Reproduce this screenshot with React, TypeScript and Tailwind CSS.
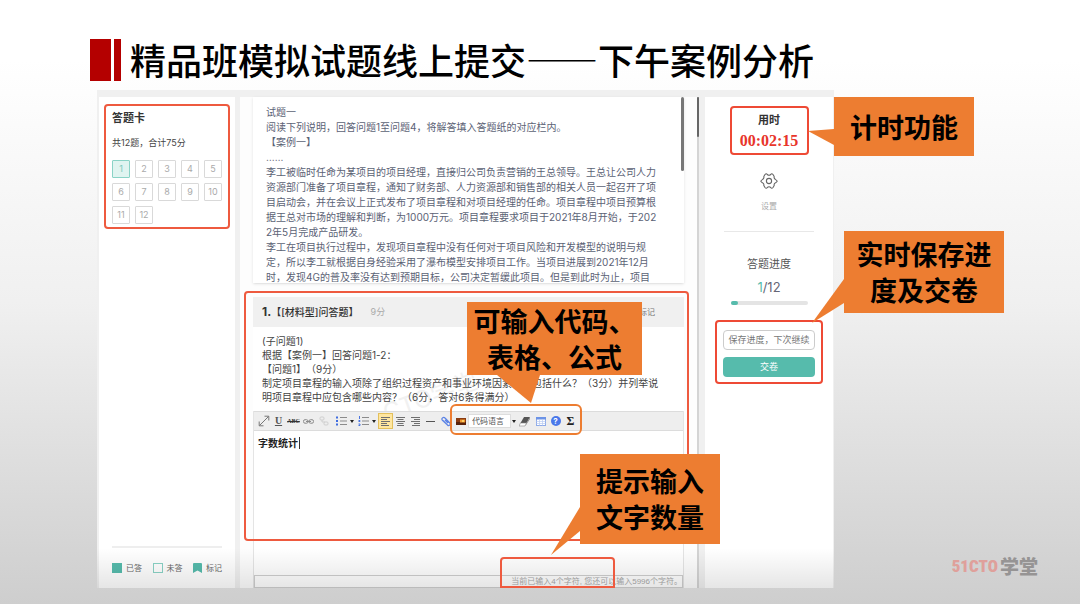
import type { ReactNode } from "react";
import clsx from "clsx";

const QUESTIONS = [1, 2, 3, 4, 5, 6, 7, 8, 9, 10, 11, 12];

const PASSAGE = [
  "试题一",
  "阅读下列说明，回答问题1至问题4，将解答填入答题纸的对应栏内。",
  "【案例一】",
  "……",
  "李工被临时任命为某项目的项目经理，直接归公司负责营销的王总领导。王总让公司人力资源部门准备了项目章程，通知了财务部、人力资源部和销售部的相关人员一起召开了项目启动会，并在会议上正式发布了项目章程和对项目经理的任命。项目章程中项目预算根据王总对市场的理解和判断，为1000万元。项目章程要求项目于2021年8月开始，于2022年5月完成产品研发。",
  "李工在项目执行过程中，发现项目章程中没有任何对于项目风险和开发模型的说明与规定，所以李工就根据自身经验采用了瀑布模型安排项目工作。当项目进展到2021年12月时，发现4G的普及率没有达到预期目标，公司决定暂缓此项目。但是到此时为止，项目",
];

type CalloutProps = {
  className: string;
  tail: string;
  children: ReactNode;
};

function Callout({ className, tail, children }: CalloutProps) {
  return (
    <div
      className={clsx(
        "absolute z-20 flex items-center justify-center bg-[#ed7d31] text-center font-['Noto_Sans_CJK_SC',sans-serif] text-[27px] leading-9 font-bold whitespace-nowrap text-black",
        className,
      )}
    >
      <svg className="absolute top-0 left-0 h-px w-px overflow-visible" aria-hidden>
        <polygon points={tail} fill="#ed7d31" />
      </svg>
      <p className="relative">{children}</p>
    </div>
  );
}

type ToolProps = {
  label: string;
  wide?: boolean;
  active?: boolean;
  children: ReactNode;
};

function Tool({ label, wide, active, children }: ToolProps) {
  return (
    <button
      type="button"
      aria-label={label}
      className={clsx(
        "flex h-4 shrink-0 items-center justify-center",
        wide ? "w-[22px] gap-[3px]" : "w-[15px]",
        active && "border border-[#e3c05c] bg-[#ffe69f]",
      )}
    >
      {children}
    </button>
  );
}

function Caret() {
  return (
    <svg width="4" height="3" viewBox="0 0 4 3" aria-hidden>
      <path d="M0 0h4L2 3z" fill="#222" />
    </svg>
  );
}

function ListIcon({ ordered }: { ordered?: boolean }) {
  return (
    <svg width="11" height="10" viewBox="0 0 11 10" aria-hidden>
      {ordered ? (
        <path d="M1.500 0v3M.5 4.500h1.500v1H.5M.5 8h1.500v1.500H.5" stroke="#4a74e0" strokeWidth="1" fill="none" />
      ) : (
        <path d="M0 .5h2v2H0zM0 4h2v2H0zM0 7.500h2v2H0z" fill="#3f6de0" />
      )}
      <path d="M4 1.500h7M4 5h7M4 8.500h7" stroke="#8b8b8b" strokeWidth="1" />
    </svg>
  );
}

function AlignIcon({ d }: { d: string }) {
  return (
    <svg width="9" height="9" viewBox="0 0 9 9" aria-hidden>
      <path d={d} stroke="#6f6f6f" strokeWidth="1" fill="none" />
    </svg>
  );
}

function Toolbar() {
  return (
    <div className="flex h-5 items-center border-y border-[#dcdcdc] bg-[#eeeeee] pl-[2px]">
      <Tool label="全屏">
        <svg width="12" height="12" viewBox="0 0 12 12" fill="none" stroke="#777" aria-hidden>
          <path d="M1.500 10.500 10.500 1.500M6.500 1.200h4.300v4.300M1.200 6.500v4.300h4.300" />
        </svg>
      </Tool>
      <Tool label="下划线">
        <span className="font-['Liberation_Serif',serif] text-[10px] leading-3 font-bold text-[#555] underline">U</span>
      </Tool>
      <Tool label="删除线">
        <span className="font-['Liberation_Serif',serif] text-[6px] leading-3 font-bold text-[#333] line-through">ABC</span>
      </Tool>
      <Tool label="链接">
        <svg width="11" height="5" viewBox="0 0 11 5" fill="none" stroke="#8a8a8a" aria-hidden>
          <rect x=".5" y=".7" width="4.500" height="3.500" rx="1.500" />
          <rect x="6" y=".7" width="4.500" height="3.500" rx="1.500" />
          <path d="M3 2.500h5" />
        </svg>
      </Tool>
      <Tool label="取消链接">
        <svg width="10" height="10" viewBox="0 0 10 10" fill="none" stroke="#cfcfcf" aria-hidden>
          <rect x="1" y="1" width="4" height="3" rx="1" />
          <rect x="5" y="6" width="4" height="3" rx="1" />
          <path d="M3 4v2h3" />
        </svg>
      </Tool>
      <span className="w-[3px] shrink-0" />
      <Tool label="无序列表" wide>
        <ListIcon />
        <Caret />
      </Tool>
      <Tool label="有序列表" wide>
        <ListIcon ordered />
        <Caret />
      </Tool>
      <Tool label="左对齐" active>
        <AlignIcon d="M0 .5h9M0 2.500h6M0 4.500h9M0 6.500h6M0 8.500h8" />
      </Tool>
      <Tool label="居中对齐">
        <AlignIcon d="M0 .5h9M1.500 2.500h6M0 4.500h9M1.500 6.500h6M1 8.500h7" />
      </Tool>
      <Tool label="右对齐">
        <AlignIcon d="M0 .5h9M3 2.500h6M0 4.500h9M3 6.500h6M1 8.500h8" />
      </Tool>
      <Tool label="分隔线">
        <span className="h-px w-[9px] bg-[#555]" />
      </Tool>
      <Tool label="附件">
        <svg width="10" height="11" viewBox="0 0 10 11" fill="none" stroke="#5b83e6" strokeWidth="1.200" aria-hidden>
          <path d="M2 4.500 6.500 9a1.500 1.500 0 0 0 2.300-2L4 2A1.700 1.700 0 0 0 1.400 4.300L6 8.600M4 4l3 3" />
        </svg>
      </Tool>
      <Tool label="图片">
        <svg width="10" height="7" viewBox="0 0 10 7" aria-hidden>
          <rect width="10" height="7" fill="#8a3b12" />
          <path d="M0 4h10v3H0z" fill="#5a230c" />
          <path d="M4 1.500h5v3H4z" fill="#f29a2e" />
          <circle cx="7" cy="3" r="1" fill="#ffdf7a" />
        </svg>
      </Tool>
      <select
        aria-label="代码语言"
        className="h-[14px] w-[43px] shrink-0 appearance-none border border-[#dddddd] bg-white pl-[3px] text-[8px] leading-3 text-[#555]"
      >
        <option>代码语言</option>
      </select>
      <span className="flex w-[6px] shrink-0 justify-center">
        <Caret />
      </span>
      <Tool label="清除格式">
        <svg width="12" height="11" viewBox="0 0 12 11" aria-hidden>
          <path d="M5 1h6L7.500 7h-6z" fill="#555" />
          <path d="M1.500 7h6L6 10H0z" fill="#fff" stroke="#888" strokeWidth=".6" />
          <path d="M11 1v2L6.300 10 7.500 7z" fill="#888" />
        </svg>
      </Tool>
      <span className="w-px shrink-0" />
      <Tool label="表格">
        <svg width="10" height="9" viewBox="0 0 10 9" aria-hidden>
          <rect x=".5" y=".5" width="9" height="8" fill="#fff" stroke="#8fabe8" />
          <path d="M0 0h10v2.500H0z" fill="#6c93e6" />
          <path d="M.5 4.500h9M.5 6.500h9M3.500 2v6.500M6.500 2v6.500" stroke="#b9cbf2" strokeWidth=".7" />
        </svg>
      </Tool>
      <Tool label="帮助">
        <span className="flex h-[10px] w-[10px] items-center justify-center rounded-full bg-[#4a78ea] text-[8px] leading-[10px] font-bold text-white">
          ?
        </span>
      </Tool>
      <Tool label="公式">
        <span className="font-['Liberation_Serif',serif] text-[12px] leading-3 font-bold text-[#222]">Σ</span>
      </Tool>
    </div>
  );
}

function AnswerCard() {
  return (
    <aside className="mr-[5px] flex w-[136px] shrink-0 flex-col bg-white">
      <section className="mx-[5px] mt-[7px] rounded border-2 border-[#ee5a3f] px-[6px] pt-1 pb-[3px]">
        <h2 className="text-[11px] leading-4 font-bold text-[#333]">答题卡</h2>
        <p className="mt-[9px] text-[9px] leading-4 text-[#444]">共12题，合计75分</p>
        <div className="mt-[9px] grid grid-cols-[repeat(5,18px)] gap-[5px]">
          {QUESTIONS.map((n) => (
            <button
              key={n}
              type="button"
              className={clsx(
                "h-[18px] rounded-[1px] border text-[9px] leading-4",
                n === 1 ? "border-[#8ad3c6] bg-[#e0f4f0] text-[#7ccabc]" : "border-[#d9d9d9] text-[#aaa]",
              )}
            >
              {n}
            </button>
          ))}
        </div>
      </section>
      <div className="mx-[13px] mt-auto flex items-center justify-between border-t-2 border-[#eeeeee] pt-3 pb-3 text-[8px] leading-4 text-[#666]">
        <span className="flex items-center gap-1">
          <span className="h-[10px] w-[10px] bg-[#56bbac]" />
          已答
        </span>
        <span className="flex items-center gap-1">
          <span className="h-[10px] w-[10px] border border-[#8ad3c6]" />
          未答
        </span>
        <span className="flex items-center gap-1">
          <svg width="9" height="10" viewBox="0 0 9 10" aria-hidden>
            <path d="M1 0h7a1 1 0 0 1 1 1v9L4.500 7.500 0 10V1a1 1 0 0 1 1-1z" fill="#56bbac" />
          </svg>
          标记
        </span>
      </div>
    </aside>
  );
}

function QuestionPanel() {
  return (
    <main className="relative flex min-w-0 flex-1 flex-col bg-[#fdfdfd] px-[13px]">
      <article className="relative h-[186px] shrink-0 overflow-hidden bg-white pt-2 pr-6 pl-[13px] text-[10px] leading-[15px] break-all text-[#5b6275] shadow">
        {PASSAGE.map((text) => (
          <p key={text}>{text}</p>
        ))}
        <span className="absolute top-0 right-0 h-[74px] w-[3px] rounded-full bg-[#777]" />
      </article>

      <div className="mt-[14px] flex h-[30px] shrink-0 items-center bg-[#f0f0f0] px-[9px] text-[#333]">
        <b className="text-[12px]">1.</b>
        <span className="text-[10px] font-medium">【[材料型]问答题】</span>
        <span className="ml-3 text-[9px] text-[#aaa]">9分</span>
        <span className="mr-5 ml-auto text-[8px] text-[#777]">标记</span>
      </div>

      <div className="relative bg-white py-[7px] pr-4 pl-[9px] text-[10px] leading-[14px] text-[#444]">
        <span className="absolute bottom-0 left-32 -rotate-20 text-[24px] leading-7 text-[#f1f1f1]" aria-hidden>
          CTO学堂
        </span>
        <div className="relative">
          <p>(子问题1)</p>
          <p>根据【案例一】回答问题1-2：</p>
          <p>【问题1】（9分）</p>
          <p>制定项目章程的输入项除了组织过程资产和事业环境因素，还包括什么？（3分）并列举说明项目章程中应包含哪些内容？（6分，答对6条得满分）</p>
        </div>
      </div>

      <div className="relative flex flex-1 flex-col border-x border-[#e4e4e4] bg-white">
        <Toolbar />
        <label className="relative flex flex-1 flex-col">
          <textarea
            aria-label="答案"
            defaultValue="字数统计"
            className="w-full flex-1 resize-none px-1 pt-1 text-[10px] leading-4 font-bold text-[#222] outline-none"
          />
          <span className="absolute top-[6px] left-[45px] h-3 w-px bg-[#333]" />
        </label>
        <p className="h-[13px] border border-[#cfcfcf] text-right font-['Liberation_Sans','Noto_Sans_CJK_SC',sans-serif] text-[8px] leading-3 text-[#aaa]">
          当前已输入4个字符, 您还可以输入5996个字符。
        </p>
      </div>

      <div className="pointer-events-none absolute top-[194px] right-[8px] bottom-[47px] left-1 z-10 rounded border-2 border-[#ee5a3f]" />
      <div className="pointer-events-none absolute right-[82px] bottom-0 z-10 h-[31px] w-[115px] rounded-t border-2 border-[#ee5a3f]" />
      <div className="pointer-events-none absolute top-[307px] left-[210px] z-10 h-[31px] w-[132px] rounded-md border-2 border-[#ed7d31]" />

      <Callout className="top-[205px] right-[55px] h-[73px] w-[175px]" tail="30,73 73,73 64,101">
        可输入代码、
        <br />
        表格、公式
      </Callout>
      <Callout className="right-[-23px] bottom-[44px] h-[90px] w-[140px]" tail="0,53 0,77 -29,101">
        提示输入
        <br />
        文字数量
      </Callout>
    </main>
  );
}

function StatusPanel() {
  return (
    <aside className="relative flex w-[128px] shrink-0 flex-col items-center bg-white pt-[9px]">
      <section className="flex h-[49px] w-[79px] flex-col items-center rounded border-2 border-[#ee4a35] pt-1">
        <h2 className="text-[11px] leading-4 font-bold text-[#333]">用时</h2>
        <time className="mt-[3px] font-['Liberation_Serif',serif] text-[16px] leading-5 font-bold text-[#e8352b]">00:02:15</time>
      </section>

      <button type="button" className="mt-[17px] flex flex-col items-center gap-2 text-[8px] leading-4 text-[#aaa]">
        <svg width="18" height="18" viewBox="0 0 18 18" fill="none" stroke="#666" strokeWidth="1.100" strokeLinejoin="round" aria-hidden>
          <path d="M5 2.500Q6.300 1 7.300 2.500Q9 3.900 10.700 2.500Q11.700 1 13 2.500L14.200 4.500Q13.700 6.700 15.600 7.600Q17.600 8.800 16.900 9.700L15.600 10.800Q13.700 11.600 14.200 13.500L13 15.500Q11.700 17 10.700 15.500Q9 14.100 7.300 15.500Q6.300 17 5 15.500L3.800 13.500Q4.300 11.600 2.400 10.800L1.100 9.700Q.4 8.800 2.400 7.600Q4.300 6.700 3.800 4.500Z" />
          <circle cx="9" cy="9" r="2.600" />
        </svg>
        设置
      </button>

      <hr className="mt-[17px] w-[90px] border-[#e8e8e8]" />

      <h3 className="mt-6 text-[11px] leading-4 text-[#555]">答题进度</h3>
      <p className="mt-[7px] text-[13px] leading-4 text-[#667]">
        <span className="text-[#56bbac]">1</span>/12
      </p>
      <div className="mt-[6px] h-1 w-[77px] rounded-full bg-[#e4e4e4]">
        <div className="h-full w-[7px] rounded-full bg-[#56bbac]" />
      </div>

      <div className="mt-[15px] flex w-[108px] flex-col gap-[7px] rounded border-2 border-[#ee4a35] px-[6px] pt-2 pb-[5px]">
        <button type="button" className="h-5 rounded-sm border border-[#ccc] text-[9px] leading-4 whitespace-nowrap text-[#777]">
          保存进度，下次继续
        </button>
        <button type="button" className="h-5 rounded-sm bg-[#56bbac] text-[9px] leading-4 text-white">
          交卷
        </button>
      </div>

      <Callout className="top-0 left-full ml-px h-[59px] w-[140px]" tail="0,32 0,48 -26,34">
        计时功能
      </Callout>
      <Callout className="top-[134px] left-full ml-[11px] h-[82px] w-[160px]" tail="0,48 0,72 -32,92">
        实时保存进
        <br />
        度及交卷
      </Callout>
    </aside>
  );
}

export default function App() {
  return (
    <div
      lang="zh-CN"
      className="relative flex min-h-screen flex-col bg-linear-to-b from-white from-10% via-[#f0f0f0] via-50% to-[#cecece] font-[Inter,'Noto_Sans_CJK_SC',sans-serif] [text-spacing-trim:space-all]"
    >
      <header className="flex items-stretch pt-[39px] pl-[90px]">
        <span className="w-[21px] bg-[#b40000]" />
        <span className="ml-[3px] w-[7px] bg-[#b40000]" />
        <h1 className="ml-[9px] pb-[2px] font-['Noto_Sans_CJK_SC',sans-serif] text-[36px] leading-10 font-medium text-black">
          精品班模拟试题线上提交——下午案例分析
        </h1>
      </header>

      <div className="relative mt-[9px] mr-[246px] mb-4 ml-[97px] flex flex-1 bg-[#f0f0f0] pt-[7px] pr-px pl-[2px]">
        <AnswerCard />
        <QuestionPanel />
        <div className="mr-[6px] w-[2px] shrink-0 bg-[#d4d4d4]">
          <div className="h-10 rounded-full bg-[#666]" />
        </div>
        <StatusPanel />
        <div className="pointer-events-none absolute inset-x-0 bottom-0 h-10 bg-linear-to-b from-transparent to-black/10" />
      </div>

      <p className="absolute right-[42px] bottom-[26px] flex items-center font-['Noto_Sans_CJK_SC',sans-serif] text-[19px] leading-6 font-black text-[#969494]">
        <span className="mr-[2px] font-['Roboto_Condensed','Roboto',sans-serif] text-[17px] text-[#dfa09b]">51CTO</span>
        学堂
      </p>
    </div>
  );
}
